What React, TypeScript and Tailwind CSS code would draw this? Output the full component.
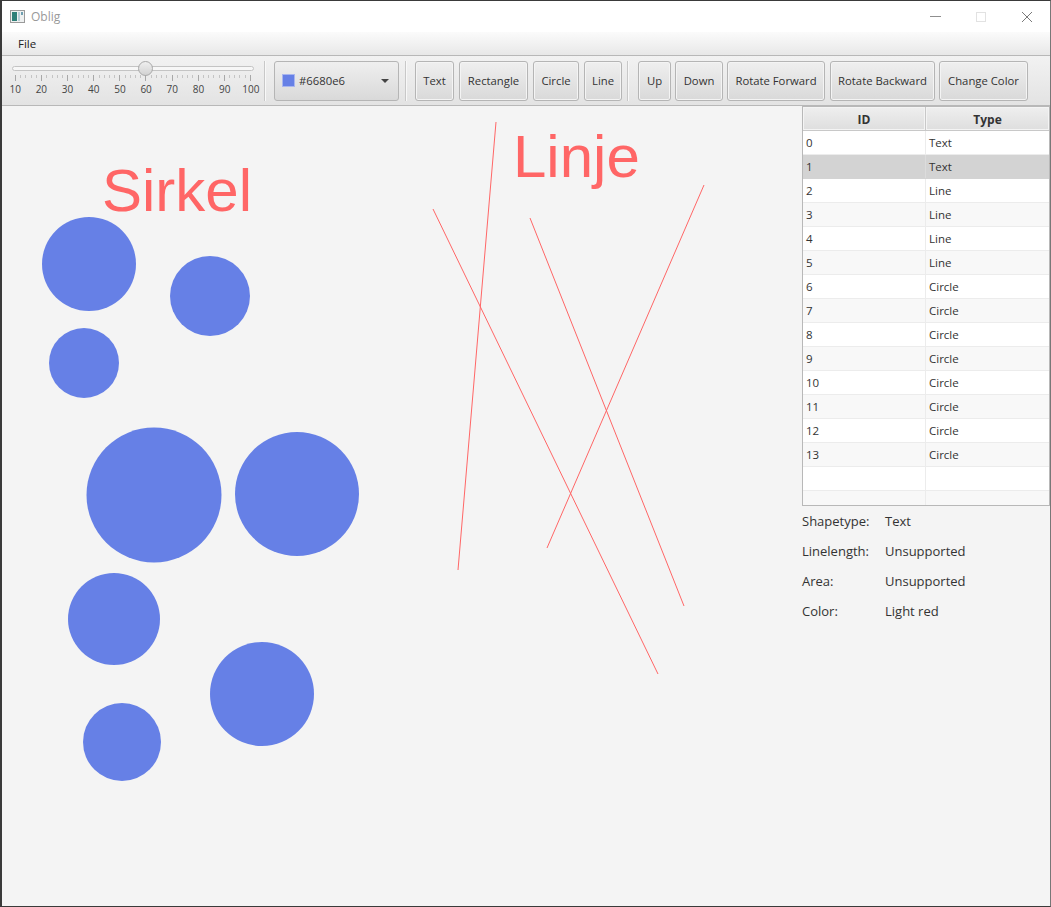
const rows = [
  ['0', 'Text'], ['1', 'Text'], ['2', 'Line'], ['3', 'Line'], ['4', 'Line'], ['5', 'Line'],
  ['6', 'Circle'], ['7', 'Circle'], ['8', 'Circle'], ['9', 'Circle'], ['10', 'Circle'],
  ['11', 'Circle'], ['12', 'Circle'], ['13', 'Circle'], ['', ''], ['', ''],
];

const circles = [
  [87, 158, 47], [208, 190, 40], [82, 257, 35], [152, 389, 67.5],
  [295, 388, 62], [112, 513, 46], [260, 588, 52], [120, 636, 39],
];

const lines = [
  [494, 16, 456, 464], [431, 103, 656, 568], [528, 112, 682, 500], [702, 79, 545, 442],
];

const info = [
  ['Shapetype:', 'Text'], ['Linelength:', 'Unsupported'], ['Area:', 'Unsupported'], ['Color:', 'Light red'],
];

const ticks = Array.from({ length: 46 }, (_, i) => i);

function ToolButton({ label, width }: { label: string; width: string }) {
  return (
    <button className={`${width} h-10 shrink-0 pt-[2px] rounded-[3px] border border-[#b5b5b5] bg-gradient-to-b from-[#efefef] to-[#d9d9d9] text-[11.3px] text-[#333] shadow-[inset_0_0_0_1px_#f4f4f4]`}>
      {label}
    </button>
  );
}

function Separator() {
  return <div className="w-[2px] h-10 shrink-0 border-l border-[#c8c8c8] bg-[#f8f8f8]" />;
}

export default function App() {
  return (
    <div className="w-[1051px] h-[907px] overflow-hidden flex flex-col bg-[#f4f4f4] border-t border-b border-l-2 border-r border-t-[#3a3a3a] border-b-[#3a3a3a] border-l-[#3a3a3a] border-r-[#777] font-['Open_Sans','Noto_Sans',sans-serif] text-[#333]">
      {/* Title bar */}
      <div className="h-[31px] shrink-0 bg-white flex items-center pl-[8px]">
        <svg width="15" height="15" viewBox="0 0 15 15" className="shrink-0">
          <rect x="0.5" y="1.5" width="14" height="12" fill="#eef0f0" stroke="#9a9a9a" />
          <rect x="2" y="3" width="5" height="9" fill="#2f7f78" />
          <rect x="8" y="3" width="2" height="9" fill="#b9cfd8" />
          <rect x="11" y="3" width="2" height="3" fill="#6f9fb0" />
        </svg>
        <span className="ml-[6px] text-xs text-[#999]">Oblig</span>
        <div className="ml-auto flex items-center">
          <div className="w-[11px] h-px bg-[#8f8f8f] mr-[35px]" />
          <div className="w-[10px] h-[10px] border border-[#e2e2e2] mr-[35px]" />
          <svg width="12" height="12" viewBox="0 0 12 12" className="mr-[17px]">
            <path d="M1 1 L11 11 M11 1 L1 11" stroke="#7a7a7a" strokeWidth="1" fill="none" />
          </svg>
        </div>
      </div>

      {/* Menu bar */}
      <div className="h-[24px] shrink-0 bg-gradient-to-b from-[#fbfbfb] to-[#e8e8e8] border-b border-[#b8b8b8] flex items-center pl-[16px] text-[11.5px] text-[#222]">
        File
      </div>

      {/* Toolbar */}
      <div className="h-[50px] shrink-0 bg-gradient-to-b from-[#f2f2f2] to-[#e3e3e3] border-b border-[#b8b8b8] flex items-center pl-[5px]">
        <div className="w-[252px] shrink-0 flex flex-col items-center">
          <div className="relative w-[242px] h-[5px] rounded-full border border-[#c4c4c4] bg-[#f7f7f7]">
            <div className="absolute left-[125px] top-[-6px] w-[15px] h-[15px] rounded-full border border-[#a8a8a8] bg-gradient-to-b from-[#efefef] to-[#d2d2d2]" />
          </div>
          <div className="w-[236px] h-[6px] mt-[4px] flex justify-between items-start">
            {ticks.map((t) => (
              <div key={t} className={`w-px ${t % 5 === 0 ? 'h-[6px] bg-[#a8a8a8]' : 'h-[3px] bg-[#c4c4c4]'}`} />
            ))}
          </div>
          <div className="flex shrink-0 text-[10px] leading-[14px] mt-[1px] text-[#444]">
            {[10, 20, 30, 40, 50, 60, 70, 80, 90, 100].map((n) => (
              <span key={n} className="w-[26.2px] text-center">{n}</span>
            ))}
          </div>
        </div>
        <div className="ml-[5px] mr-[8px]"><Separator /></div>
        <div className="w-[125px] h-10 shrink-0 rounded-[3px] border border-[#b5b5b5] bg-gradient-to-b from-[#efefef] to-[#d9d9d9] flex items-center pl-[7px] pr-[9px] text-[11.3px]">
          <div className="w-[13px] h-[13px] bg-[#6680e6] border border-[#a9b6ee]" />
          <span className="ml-[4px] pt-[2px]">#6680e6</span>
          <svg width="8" height="4" viewBox="0 0 8 4" className="ml-auto"><path d="M0 0 H8 L4 4 Z" fill="#444" /></svg>
        </div>
        <div className="ml-[6px] mr-[8px]"><Separator /></div>
        <div className="flex gap-[5px]">
          <ToolButton label="Text" width="w-[39px]" />
          <ToolButton label="Rectangle" width="w-[69px]" />
          <ToolButton label="Circle" width="w-[46px]" />
          <ToolButton label="Line" width="w-[38px]" />
        </div>
        <div className="ml-[5px] mr-[9px]"><Separator /></div>
        <div className="flex gap-[4px]">
          <ToolButton label="Up" width="w-[33px]" />
          <ToolButton label="Down" width="w-[48px]" />
          <ToolButton label="Rotate Forward" width="w-[98px]" />
          <ToolButton label="Rotate Backward" width="w-[105px] ml-px" />
          <ToolButton label="Change Color" width="w-[89px]" />
        </div>
      </div>

      {/* Main */}
      <div className="flex-1 flex min-h-0">
        <div className="relative w-[800px] shrink-0 overflow-hidden">
          <svg width="800" height="800" className="absolute left-0 top-0">
            {circles.map(([cx, cy, r]) => (
              <circle key={`${cx}-${cy}`} cx={cx} cy={cy} r={r} fill="#6680e6" />
            ))}
            {lines.map(([x1, y1, x2, y2]) => (
              <line key={`${x1}-${y1}`} x1={x1} y1={y1} x2={x2} y2={y2} stroke="#ff6666" strokeWidth="1" />
            ))}
          </svg>
          <span className="absolute left-[100px] top-[49px] text-[60px] leading-[72px] text-[#ff6666] font-['Liberation_Sans',sans-serif]">Sirkel</span>
          <span className="absolute left-[511px] top-[15px] text-[60px] leading-[72px] text-[#ff6666] font-['Liberation_Sans',sans-serif]">Linje</span>
        </div>

        <div className="flex-1 min-w-0">
          <div className="w-[248px] h-[400px] border border-[#b8b8b8] bg-white overflow-hidden">
            <div className="h-[24px] flex bg-gradient-to-b from-[#efefef] to-[#dedede] border-b border-[#c8c8c8] text-xs font-bold text-[#333]">
              <div className="w-[123px] pt-[2px] border-r border-[#c8c8c8] flex items-center justify-center shadow-[inset_0_0_0_1px_#f4f4f4]">ID</div>
              <div className="flex-1 pt-[2px] flex items-center justify-center shadow-[inset_0_0_0_1px_#f4f4f4]">Type</div>
            </div>
            {rows.map(([id, type], i) => (
              <div
                key={i}
                className={`h-[24px] flex items-center text-[11.5px] border-b ${
                  i === 1 ? 'bg-[#d3d3d3] border-[#d3d3d3]' : i % 2 === 0 ? 'bg-white border-[#ececec]' : 'bg-[#f8f8f8] border-[#ececec]'
                }`}
              >
                <div className={`w-[123px] h-full pl-[3px] flex items-center border-r ${i === 1 ? 'border-[#dcdcdc]' : 'border-[#ececec]'}`}>{id}</div>
                <div className="flex-1 pl-[3px]">{type}</div>
              </div>
            ))}
          </div>
          <div className="mt-[1px] flex flex-col">
            {info.map(([label, value]) => (
              <div key={label} className="h-[30px] flex items-center text-[13px]">
                <span className="w-[83px]">{label}</span>
                <span>{value}</span>
              </div>
            ))}
          </div>
        </div>
      </div>
    </div>
  );
}
